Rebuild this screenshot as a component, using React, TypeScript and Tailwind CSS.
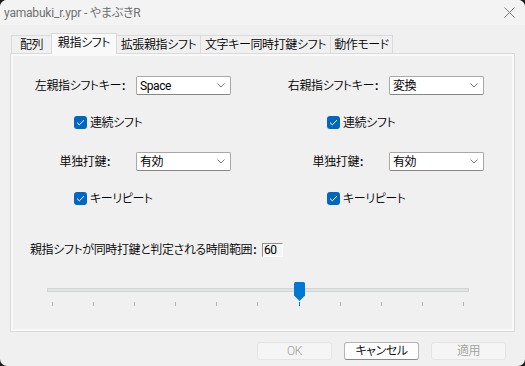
import React from "react";

const font = "font-['Roboto','Noto_Sans_CJK_JP',sans-serif] [font-feature-settings:'palt'] tracking-[-0.4px] font-[350]";

function Colon() {
  return <span className="font-bold pl-[1px]">:</span>;
}

function Chevron() {
  return (
    <svg width="8" height="5" viewBox="0 0 8 5" className="shrink-0">
      <path d="M0.5 0.5 L4 4 L7.5 0.5" fill="none" stroke="#6a6a6a" strokeWidth="0.9" />
    </svg>
  );
}

function Combo({ value }: { value: string }) {
  return (
    <div className="w-[95px] h-[19px] bg-white border border-[#a8a8a8] border-b-[#868686] rounded-[2px] flex items-center justify-between pl-[3px] pr-[5px] text-[12px] text-black leading-none">
      <span className="font-normal">{value}</span>
      <Chevron />
    </div>
  );
}

function Check({ label }: { label: string }) {
  return (
    <div className="flex items-center h-[13px] ml-[61px]">
      <div className="w-[13px] h-[13px] rounded-[3px] bg-[#0067c0] flex items-center justify-center">
        <svg width="9" height="7" viewBox="0 0 9 7">
          <path d="M1 3.6 L3.3 5.8 L8 1.2" fill="none" stroke="#ffffff" strokeWidth="1" />
        </svg>
      </div>
      <span className="ml-[3px] text-[12px] text-black leading-none whitespace-nowrap">{label}</span>
    </div>
  );
}

function Column({ keyLabel, keyValue }: { keyLabel: string; keyValue: string }) {
  return (
    <div className="flex flex-col">
      <div className="mt-[20px] h-[19px] flex items-center">
        <div className="w-[112px] text-right text-[12px] text-black leading-none whitespace-nowrap">
          {keyLabel}
          <Colon />
        </div>
        <div className="ml-[11px]">
          <Combo value={keyValue} />
        </div>
      </div>
      <div className="mt-[21px]">
        <Check label="連続シフト" />
      </div>
      <div className="mt-[23px] h-[19px] flex items-center">
        <div className="w-[97px] text-right text-[12px] text-black leading-none whitespace-nowrap">
          単独打鍵
          <Colon />
        </div>
        <div className="ml-[26px]">
          <Combo value="有効" />
        </div>
      </div>
      <div className="mt-[21px]">
        <Check label="キーリピート" />
      </div>
    </div>
  );
}

const tabs = [
  { label: "配列", w: 41 },
  { label: "親指シフト", w: 66, sel: true },
  { label: "拡張親指シフト", w: 85 },
  { label: "文字キー同時打鍵シフト", w: 131 },
  { label: "動作モード", w: 63 },
];

function Button({ label, disabled, primary }: { label: string; disabled?: boolean; primary?: boolean }) {
  return (
    <div
      className={
        "w-[75px] h-[18px] rounded-[3px] flex items-center justify-center text-[12px] leading-none " +
        (disabled
          ? "bg-[#f5f5f5] border border-[#e5e5e5] text-[#a0a0a0]"
          : primary
          ? "bg-[#fdfdfd] border border-[#b5b5b5] border-b-[#8a8a8a] text-black"
          : "")
      }
    >
      {label}
    </div>
  );
}

export default function App() {
  const ticks = Array.from({ length: 11 }, (_, i) => i);
  const value = 6;
  return (
    <div className={"w-[525px] h-[366px] bg-[#1a1a1a] " + font}>
      <div className="w-full h-full rounded-[7px] overflow-hidden bg-[#f0f0f0] flex flex-col">
        {/* title bar */}
        <div className="h-[25px] bg-[#f3f3f3] flex items-center justify-between pl-[4px] pr-[10px]">
          <span className="text-[12px] text-[#707070] leading-none tracking-[-0.2px] font-normal">yamabuki_r.ypr - やまぶきR</span>
          <svg width="11" height="11" viewBox="0 0 11 11">
            <path d="M0.5 0.5 L10.5 10.5 M10.5 0.5 L0.5 10.5" stroke="#7a7a7a" strokeWidth="1" />
          </svg>
        </div>

        {/* tabs */}
        <div className="mt-[8px] pl-[11px] h-[21px] flex items-end -mb-px relative z-10">
          {tabs.map((t, i) =>
            t.sel ? (
              <div
                key={t.label}
                style={{ width: t.w }}
                className={
                  "h-[21px] bg-[#f9f9f9] border-t border-l border-r border-[#dadada] flex items-start justify-center pt-[2px] text-[12px] text-black leading-[15px] whitespace-nowrap " +
                  (i > 0 ? "-ml-px" : "")
                }
              >
                {t.label}
              </div>
            ) : (
              <div
                key={t.label}
                style={{ width: t.w }}
                className={
                  "h-[18px] mb-px bg-[#f0f0f0] border-t border-l border-r border-[#dadada] flex items-center justify-center text-[12px] text-black leading-none whitespace-nowrap " +
                  (i > 0 ? "-ml-px" : "")
                }
              >
                {t.label}
              </div>
            )
          )}
        </div>

        {/* panel */}
        <div className="mx-[10px] h-[279px] border border-[#dadada] bg-[#f9f9f9] p-[2px]">
          <div className="w-full h-full bg-[#f0f0f0] flex flex-col">
            <div className="grid grid-cols-[253px_1fr]">
              <Column keyLabel="左親指シフトキー" keyValue="Space" />
              <Column keyLabel="右親指シフトキー" keyValue="変換" />
            </div>

            <div className="mt-[38px] h-[14px] pl-[17px] flex items-center">
              <div className="w-[232px] text-[12px] text-black leading-none whitespace-nowrap">
                親指シフトが同時打鍵と判定される時間範囲
                <Colon />
              </div>
              <div className="w-[21px] h-[14px] border-t border-l border-[#8f8f8f] border-r border-b border-r-white border-b-white bg-[#f5f5f5] flex items-center pl-[1px] text-[12px] text-black leading-none font-normal">
                60
              </div>
            </div>

            {/* slider */}
            <div className="mt-[25px] ml-[34px] w-[422px] h-[24px] relative">
              <div className="absolute left-0 right-0 top-[6px] h-[4px] bg-[#e2e3e3] border border-[#d2d4d4]" />
              <div className="absolute left-0 right-0 top-[20px] h-[4px] px-[5px] flex justify-between">
                {ticks.map((i) => (
                  <div key={i} className={"w-px h-[4px] " + (i === value ? "bg-[#0078d4]" : "bg-[#b4b4b4]")} />
                ))}
              </div>
              <svg
                width="11"
                height="19"
                viewBox="0 0 11 19"
                className="absolute top-0"
                style={{ left: 5 + value * 41.1 - 5 }}
              >
                <path d="M0 1.5 Q0 0 1.5 0 H9.5 Q11 0 11 1.5 V13.5 L5.5 19 L0 13.5 Z" fill="#0078d4" />
              </svg>
            </div>
          </div>
        </div>

        {/* buttons */}
        <div className="mt-[10px] pr-[19px] flex justify-end gap-[12px]">
          <Button label="OK" disabled />
          <Button label="キャンセル" primary />
          <Button label="適用" disabled />
        </div>
      </div>
    </div>
  );
}
